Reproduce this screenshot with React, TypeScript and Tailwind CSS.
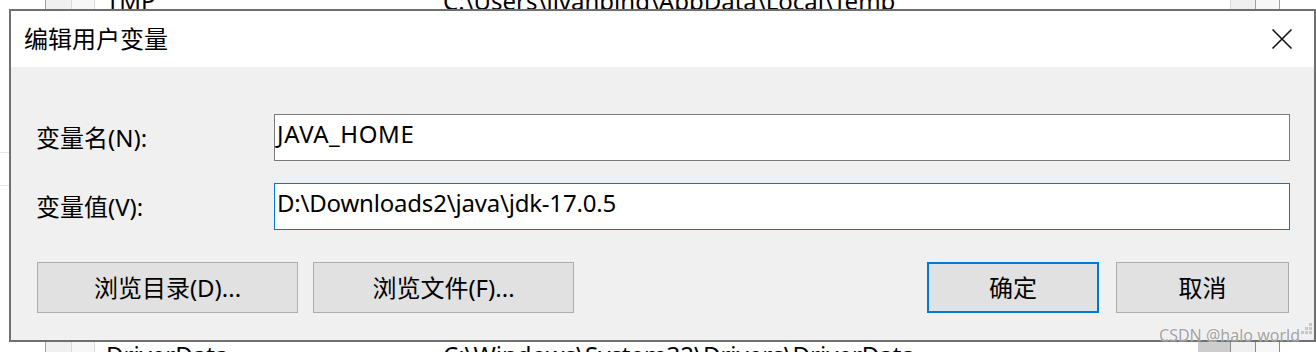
import React from "react";

const FONT = "font-['Noto_Sans','Noto_Sans_CJK_SC',sans-serif]";

function CloseIcon() {
  return (
    <svg width="22" height="22" viewBox="0 0 22 22" className="block">
      <path d="M1.5 1.5 L20.5 20.5 M20.5 1.5 L1.5 20.5" stroke="#111" strokeWidth="1.6" fill="none" />
    </svg>
  );
}

function Grip() {
  const dots = [
    [8, 0],
    [4, 4],
    [8, 4],
    [0, 8],
    [4, 8],
    [8, 8],
  ];
  return (
    <svg width="12" height="12" viewBox="0 0 12 12" className="block">
      {dots.map(([x, y], i) => (
        <rect key={i} x={x} y={y} width="3" height="3" fill="#c8c8c8" />
      ))}
    </svg>
  );
}

function BgRow({ name, value, variant }: { name: string; value: string; variant: "top" | "bottom" }) {
  return (
    <div className="flex h-[33px] items-center text-[24px] text-black">
      <div className="w-[45px] shrink-0" />
      <div className="h-full w-[26px] shrink-0 border-l border-[#a0a0a0] bg-[#f0f0f0]" />
      <div className="h-full w-[24px] shrink-0 border-l border-r border-[#d9d9d9] bg-[#f7f7f7]" />
      <div className="w-[348px] shrink-0 pl-[11px] leading-none">{name}</div>
      <div className="flex-1 leading-none">{value}</div>
      {variant === "top" ? (
        <>
          <div className="h-full w-[25px] shrink-0 border-l border-[#d9d9d9] bg-[#f0f0f0]" />
          <div className="h-full w-[25px] shrink-0 border-l border-r border-[#a0a0a0] bg-[#f7f7f7]" />
        </>
      ) : (
        <>
          <div className="h-full w-[32px] shrink-0 bg-[#cdcdcd]" />
          <div className="h-full w-[25px] shrink-0 border-l border-[#8a8a8a] bg-[#f0f0f0]" />
          <div className="h-full w-[25px] shrink-0 border-l border-r border-[#8a8a8a] bg-[#f7f7f7]" />
        </>
      )}
      <div className="w-[36px] shrink-0" />
    </div>
  );
}

export default function App() {
  return (
    <div className={`relative h-[352px] w-[1316px] overflow-hidden bg-white ${FONT}`}>
      {/* background list behind the dialog */}
      <div className="flex h-full flex-col justify-between">
        <div className="-mt-[16px]">
          <BgRow name="TMP" value="C:\Users\liyanping\AppData\Local\Temp" variant="top" />
        </div>
        <div className="-mb-[19px]">
          <BgRow name="DriverData" value="C:\Windows\System32\Drivers\DriverData" variant="bottom" />
        </div>
      </div>
      <div className="absolute left-0 top-[152px] h-px w-[9px] bg-[#e5e5e5]" />
      <div className="absolute left-0 top-[185px] h-px w-[9px] bg-[#e5e5e5]" />

      {/* dialog */}
      <div className="absolute left-[9px] top-[9px] flex h-[333px] w-[1307px] flex-col border-2 border-[#6f6f6f] bg-[#f0f0f0]">
        <div className="flex h-[56px] shrink-0 items-center justify-between bg-white pl-[13px] pr-[21px]">
          <span className="text-[24px] leading-none text-black">编辑用户变量</span>
          <CloseIcon />
        </div>
        <div className="flex flex-1 flex-col pl-[25px] pt-[47px]">
          <div className="flex h-[47px] items-center">
            <div className="w-[238px] shrink-0 text-[24px] text-black">变量名(N):</div>
            <div className="flex h-[47px] w-[1016px] items-center border border-[#7a7a7a] bg-white pb-[7px] pl-[2px] text-[24px] tracking-[0.6px] text-black">
              JAVA_HOME
            </div>
          </div>
          <div className="mt-[22px] flex h-[47px] items-center">
            <div className="w-[238px] shrink-0 text-[24px] text-black">变量值(V):</div>
            <div className="flex h-[47px] w-[1016px] items-center border border-[#0078d7] bg-white pb-[7px] pl-[2px] text-[24px] tracking-[-0.2px] text-black">
              D:\Downloads2\java\jdk-17.0.5
            </div>
          </div>
          <div className="mt-[32px] flex h-[51px] items-stretch pl-px">
            <button className="flex w-[261px] items-center justify-center border border-[#adadad] bg-[#e1e1e1] text-[24px] text-black">
              浏览目录(D)...
            </button>
            <button className="ml-[15px] flex w-[261px] items-center justify-center border border-[#adadad] bg-[#e1e1e1] text-[24px] text-black">
              浏览文件(F)...
            </button>
            <button className="ml-[353px] flex w-[172px] items-center justify-center border-2 border-[#0078d7] bg-[#e1e1e1] text-[24px] text-black">
              确定
            </button>
            <button className="ml-[17px] flex w-[173px] items-center justify-center border border-[#adadad] bg-[#e1e1e1] text-[24px] text-black">
              取消
            </button>
          </div>
        </div>
      </div>

      {/* watermark */}
      <div className="absolute right-[16px] top-[327px] text-[16px] leading-none text-[#a3a3a3] [text-shadow:0_0_2px_#fff]">
        CSDN @halo world
      </div>
      <div className="absolute left-[1301px] top-[323px]">
        <Grip />
      </div>
    </div>
  );
}
